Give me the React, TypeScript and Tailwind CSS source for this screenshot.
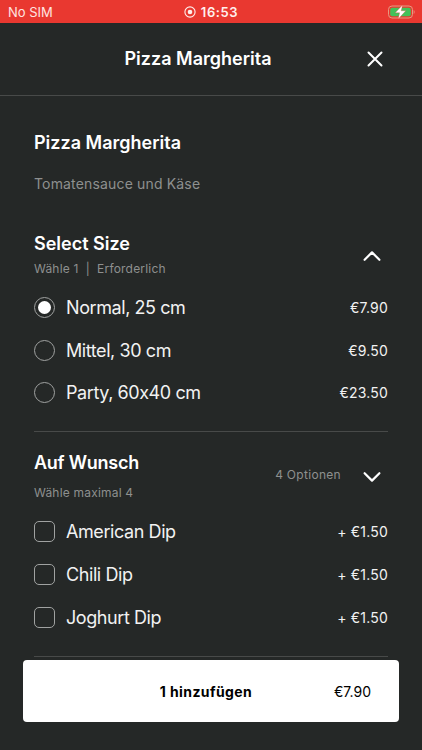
import { useState } from 'react'

const sizes = [
  { name: 'Normal, 25 cm', price: '€7.90' },
  { name: 'Mittel, 30 cm', price: '€9.50' },
  { name: 'Party, 60x40 cm', price: '€23.50' },
]

const extras = [
  { name: 'American Dip', price: '+ €1.50' },
  { name: 'Chili Dip', price: '+ €1.50' },
  { name: 'Joghurt Dip', price: '+ €1.50' },
]

const StatusBar = () => (
  <div className="relative flex h-[23px] shrink-0 items-center justify-between bg-[#e93830] pl-2 pr-[7px] text-[13px] text-[#ffe4e0]">
    <span className="leading-[22px]">No SIM</span>
    <div className="absolute inset-x-0 top-0 flex h-[23px] items-center justify-center gap-[5px] pt-px font-semibold text-[#fff0ed]">
      <svg width="12" height="12" viewBox="0 0 12 12">
        <circle cx="6" cy="6" r="5.1" fill="none" stroke="currentColor" strokeWidth="1.1" />
        <circle cx="6" cy="6" r="2.3" fill="currentColor" />
      </svg>
      <span className="leading-[22px] tracking-[0.6px]">16:53</span>
    </div>
    <svg width="27" height="14" viewBox="0 0 27 14">
      <rect x="0.5" y="1" width="24" height="12" rx="3.5" fill="none" stroke="#e59a80" />
      <rect x="2.2" y="2.7" width="20.6" height="8.6" rx="2" fill="#43c159" />
      <path d="M25.6 5v4c.8-.4 1.2-1.1 1.2-2s-.4-1.6-1.2-2z" fill="#f07a70" />
      <path d="M14.6 0 7.2 7.8h4.4L10.200 14l7.600-8.200h-4.600z" fill="#fff" stroke="#e93830" strokeWidth="0.3" />
    </svg>
  </div>
)

const Chevron = ({ up }: { up?: boolean }) => (
  <svg
    width="18"
    height="12"
    viewBox="0 0 18 12"
    fill="none"
    stroke="#fff"
    strokeWidth="2.2"
    strokeLinecap="round"
    strokeLinejoin="round"
  >
    <path d={up ? 'M1.6 9.8 9 2.400l7.400 7.400' : 'M1.6 2.2 9 9.600l7.400-7.400'} />
  </svg>
)

const App = () => {
  const [size, setSize] = useState(0)
  const [picked, setPicked] = useState<number[]>([])

  const toggle = (idx: number) =>
    setPicked(picked.includes(idx) ? picked.filter((i) => i !== idx) : [...picked, idx])

  return (
    <div className="flex h-[750px] w-full flex-col overflow-hidden bg-[#252827] font-['Inter',sans-serif] text-white [font-feature-settings:'calt'_0]">
      <StatusBar />

      <header className="relative flex h-[73px] shrink-0 items-center justify-center border-b border-[#484a49] pb-[2px] pr-[26px]">
        <h1 className="text-[18px] font-semibold">Pizza Margherita</h1>
        <button className="absolute right-[39px] top-[28px]">
          <svg width="16" height="16" viewBox="0 0 16 16" stroke="#fff" strokeWidth="2" strokeLinecap="round">
            <path d="m1.5 1.5 13 13m0-13-13 13" />
          </svg>
        </button>
      </header>

      <main className="min-h-0 flex-1 overflow-hidden px-[34px] pt-[35px]">
        <h2 className="text-[18px] font-semibold leading-6">Pizza Margherita</h2>
        <p className="mt-[19px] text-[14px] leading-5 tracking-[0.16px] text-[#8e908f]">Tomatensauce und Käse</p>

        {/* size */}
        <section className="mt-[38px] border-b border-[#484a49] pb-[17px]">
          <div className="flex items-center justify-between pr-[7px]">
            <div>
              <h3 className="text-[18px] font-semibold leading-6">Select Size</h3>
              <p className="mt-[5px] whitespace-pre text-[12px] leading-4 tracking-[0.2px] text-[#8e908f]">Wähle 1  |  Erforderlich</p>
            </div>
            <div className="pt-[3px]">
              <Chevron up />
            </div>
          </div>
          <div className="mt-[9px]">
            {sizes.map((item, idx) => (
              <div key={item.name} className="flex h-[42.75px] items-center" onClick={() => setSize(idx)}>
                <span className="flex size-[21px] items-center justify-center rounded-full border border-[#a0a2a1]">
                  {size === idx && <span className="size-[13px] rounded-full bg-white" />}
                </span>
                <span className="ml-[11px] flex-1 text-[18px] tracking-[-0.42px] text-[#f2f2f2]">{item.name}</span>
                <span className="text-[14px] tracking-[0.2px] text-[#f2f2f2]">{item.price}</span>
              </div>
            ))}
          </div>
        </section>

        {/* extras */}
        <section className="mt-[19px] border-b border-[#484a49] pb-[17px]">
          <div className="flex items-center justify-between pr-[7px]">
            <div>
              <h3 className="text-[18px] font-semibold leading-6 tracking-[-0.25px]">Auf Wunsch</h3>
              <p className="mt-[10px] text-[12px] leading-4 tracking-[0.2px] text-[#8e908f]">Wähle maximal 4</p>
            </div>
            <div className="flex items-center gap-[22px]">
              <span className="pb-[3px] text-[12px] leading-4 tracking-[0.3px] text-[#8e908f]">4 Optionen</span>
              <div className="pt-[2px]">
                <Chevron />
              </div>
            </div>
          </div>
          <div className="mt-[9px]">
            {extras.map((item, idx) => (
              <div key={item.name} className="flex h-[42.75px] items-center" onClick={() => toggle(idx)}>
                <span className="flex size-[21px] items-center justify-center rounded-[5px] border border-[#a0a2a1]">
                  {picked.includes(idx) && <span className="size-[11px] rounded-[2px] bg-white" />}
                </span>
                <span className="ml-[11px] flex-1 text-[18px] tracking-[-0.42px] text-[#f2f2f2]">{item.name}</span>
                <span className="text-[14px] tracking-[0.2px] text-[#f2f2f2]">{item.price}</span>
              </div>
            ))}
          </div>
        </section>
      </main>

      <footer className="shrink-0 px-[23px] pb-[28px] pt-[3px]">
        <button className="grid h-[62px] w-full grid-cols-[1fr_auto_1fr] items-center rounded-[4px] bg-white pl-[18px] pr-[28px] text-black">
          <span />
          <span className="text-[14px] font-bold tracking-[0.4px]">1 hinzufügen</span>
          <span className="text-right text-[14px]">€7.90</span>
        </button>
      </footer>
    </div>
  )
}

export default App
